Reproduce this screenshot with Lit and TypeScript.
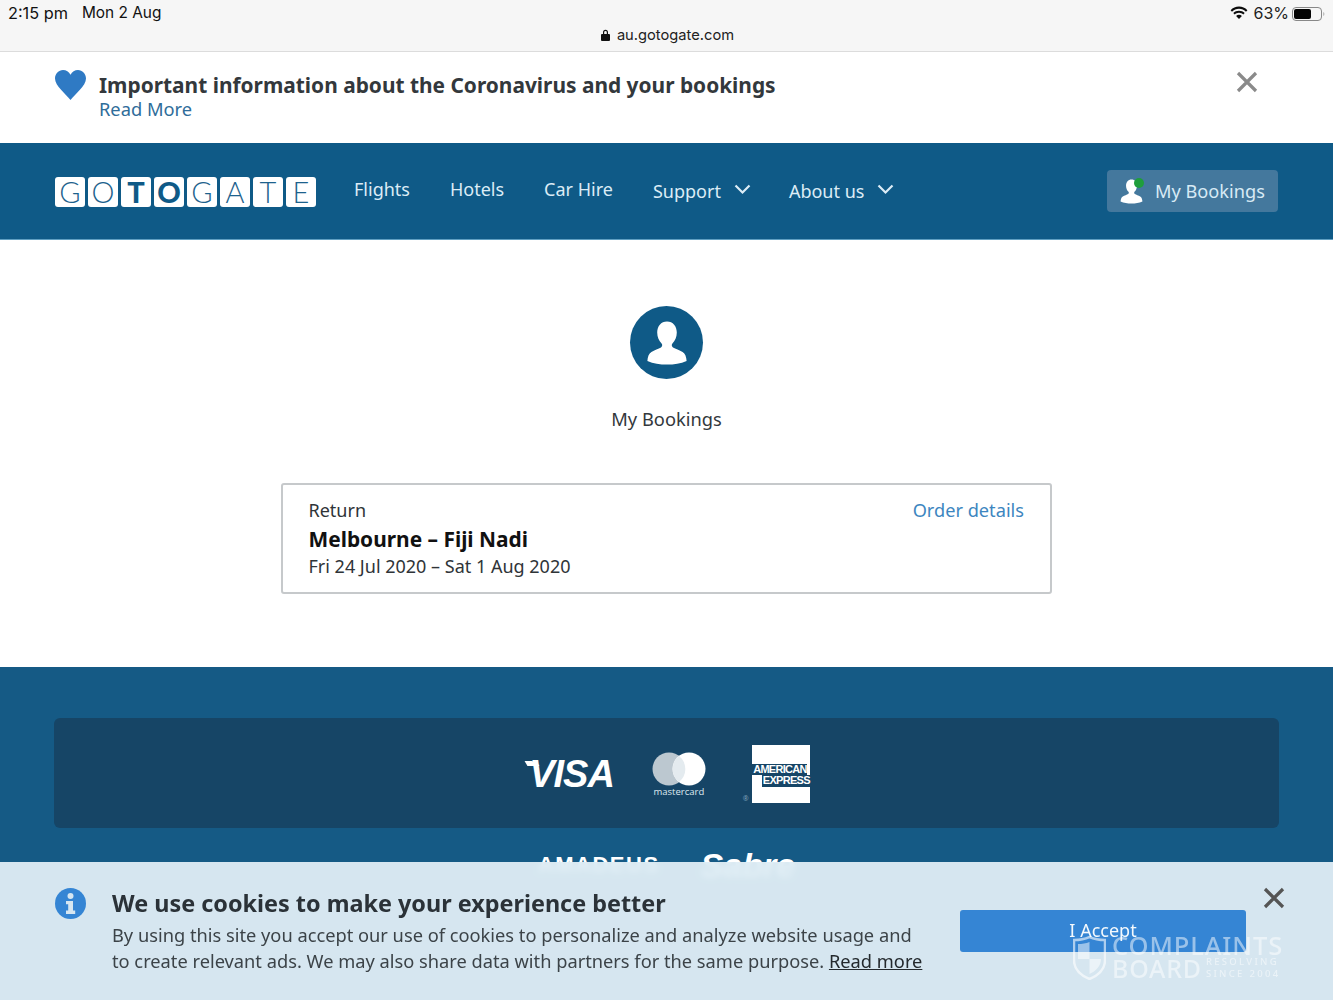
import { LitElement, html, css, svg } from "lit";
import { customElement } from "lit/decorators.js";

const person = svg`<path d="M12 2.2c-3 0-4.9 2.4-4.9 5.6 0 2.2.9 4.2 2.2 5.5.5.6.4 1.5-.3 1.9-1.200.7-3.300 1.300-4.800 2.300C2.900 18.300 2.300 20 2.200 22c3 1.300 6.200 1.800 9.800 1.800s6.800-.5 9.800-1.800c-.1-2-.7-3.700-2-4.500-1.500-1-3.600-1.600-4.800-2.300-.7-.4-.8-1.300-.3-1.900 1.300-1.300 2.200-3.300 2.200-5.500C16.900 4.600 15 2.200 12 2.200z"/>`;

@customElement("app-root")
export class AppRoot extends LitElement {
  static styles = css`
    :host { display: block; position: relative; height: 1000px; overflow: hidden; background: #fff; font-family: "Noto Sans", sans-serif; color: #2f3438; }
    a { text-decoration: none; color: inherit; }
    .status { height: 52px; box-sizing: border-box; background: #f6f6f6; border-bottom: 1px solid #dcdcdc; font-family: Inter, "Liberation Sans", sans-serif; color: #111; font-size: 15.400px; }
    .status-row { display: flex; justify-content: space-between; padding: 3px 5px 0 8px; line-height: 20px; }
    .left { display: flex; gap: 14px; }
    .time { font-size: 16.300px; }
    .right { display: flex; align-items: center; gap: 5px; font-size: 16px; color: #222; }
    .wifi { width: 18px; height: 14px; fill: #0c0c0c; }
    .battery { width: 36px; height: 16px; margin: 1px 0 0 -1px; }
    .pct { margin-right: -1px; }
    .url { display: flex; justify-content: center; align-items: center; gap: 7px; margin-top: 2px; padding-left: 2px; line-height: 20px; font-size: 14.700px; color: #222; }
    .lock { width: 9px; height: 12px; fill: #111; }

    .notice { height: 91px; box-sizing: border-box; display: flex; padding: 18px 75px 0 55px; }
    .heart { width: 31px; height: 30px; fill: #2f7ac4; flex: none; }
    .notice-text { margin-left: 13px; flex: 1; padding-top: 1px; }
    .notice-title { font-size: 20.880px; line-height: 28px; font-weight: 700; color: #33383c; }
    .notice-link { font-size: 18.300px; line-height: 21px; margin-top: -1px; color: #2f6d9a; }
    .x { width: 22px; height: 22px; stroke: #8a8a8a; stroke-width: 3.200; fill: none; flex: none; margin-top: 1px; }

    nav { height: 97px; background: #0f5a87; border-bottom: 1px solid #5f9fc2; display: flex; align-items: center; padding: 0 55px; box-sizing: border-box; color: #dcecf6; font-size: 18px; }
    .logo { display: flex; gap: 3px; margin-right: 38px; margin-top: 1px; }
    .tile { width: 30px; height: 30px; background: #fff; border-radius: 3px; display: flex; align-items: center; justify-content: center; color: #1d628d; font-family: Lato, "Noto Sans", sans-serif; font-size: 29px; font-weight: 300; line-height: 30px; }
    .tile.b { font-weight: 900; color: #0f5a87; }
    .links { display: flex; align-items: center; flex: 1; }
    .links a { display: flex; align-items: center; margin-right: 40px; margin-top: -4px; }
    .links a.dd { margin-top: 0; margin-right: 38px; }
    .links a.dd.last { margin-right: 0; }
    .chev { width: 17px; height: 11px; stroke: #dcecf6; stroke-width: 2.200; fill: none; margin-left: 13px; margin-top: -3px; }
    .mybtn { width: 171px; height: 42px; box-sizing: border-box; background: #44789d; border-radius: 4px; display: flex; align-items: center; padding-left: 10.500px; font-size: 18.200px; color: #d8eaf5; }
    .avatar { position: relative; width: 27px; height: 29px; margin-right: 10.500px; fill: #fff; }
    .avatar svg { width: 27px; height: 29px; display: block; }
    .dot { position: absolute; top: 1.500px; left: 16.500px; width: 10px; height: 10px; background: #1f9e3c; border-radius: 50%; }

    main { height: 427px; box-sizing: border-box; padding-top: 66px; display: flex; flex-direction: column; align-items: center; }
    .circle { width: 73px; height: 73px; border-radius: 50%; background: #0f5a87; display: flex; align-items: center; justify-content: center; fill: #fff; }
    .circle svg { width: 48px; height: 52px; }
    .mb { font-size: 18.300px; line-height: 24px; margin-top: 28px; color: #33383c; }
    .card { width: 771px; height: 111px; box-sizing: border-box; margin-top: 52px; border: 2px solid #c6c9cb; border-radius: 3px; padding: 13px 26px 13px 25.500px; display: flex; justify-content: space-between; }
    .r1 { font-size: 18px; line-height: 24px; }
    .r2 { font-size: 20.900px; line-height: 30px; font-weight: 700; color: #111; margin-top: 2px; }
    .r3 { font-size: 18px; line-height: 24px; }
    .order { font-size: 18.200px; line-height: 24px; color: #3d86c0; }

    footer { background: #155a85; padding: 51px 54px 0; height: 400px; box-sizing: border-box; color: #fff; }
    .panel { height: 110px; background: #164566; border-radius: 6px; display: flex; align-items: center; justify-content: center; padding-left: 2px; }
    .visa { font-family: "Liberation Sans", sans-serif; font-weight: 700; font-style: italic; font-size: 38px; letter-spacing: -1px; line-height: 40px; position: relative; margin: 2px 38px 0 4px; }
    .visa i { position: absolute; left: -3px; top: 7px; width: 12px; height: 5px; background: #fff; border-radius: 0 8px 0 0; transform: skewX(30deg); }
    .mc { display: flex; flex-direction: column; align-items: center; margin-right: 46px; margin-top: 3px; }
    .mc svg { width: 54px; height: 34px; }
    .mc span { font-size: 9.500px; line-height: 10px; margin-top: 1px; color: #dfe9f0; font-family: "Open Sans", sans-serif; }
    .amexwrap { position: relative; margin-top: 2px; }
    .amex { width: 58px; height: 58px; background: #fff; display: flex; flex-direction: column; justify-content: center; align-items: flex-end; padding-top: 2px; box-sizing: border-box; font-family: "Liberation Sans", sans-serif; font-weight: 700; font-size: 11px; line-height: 11.500px; letter-spacing: -.7px; }
    .amex span { background: #164566; color: #fff; padding-left: 1px; }
    .amex span:first-child { margin-right: 3px; }
    .reg { position: absolute; left: -9px; bottom: 0; font-size: 7px; line-height: 8px; color: #7fa0b8; }
    .partners { display: flex; justify-content: center; gap: 41px; margin-top: 19px; align-items: flex-start; }
    .amadeus { font-family: "Liberation Sans", sans-serif; font-weight: 700; font-size: 22px; letter-spacing: 1.500px; line-height: 30px; margin-top: 3px; }
    .sabre { font-family: "Liberation Sans", sans-serif; font-weight: 700; font-style: italic; font-size: 34px; line-height: 36px; }

    .cookie { position: absolute; left: 0; right: 0; bottom: 0; height: 138px; box-sizing: border-box; background: rgba(224, 238, 246, .95); backdrop-filter: blur(3px); display: flex; padding: 26px 0 0 55px; }
    .info { width: 31px; height: 31px; flex: none; }
    .ctext { margin: 0 33px 0 26px; width: 815px; flex: none; }
    .ctitle { font-size: 23.400px; line-height: 30px; font-weight: 700; color: #2b3238; }
    .cbody { font-size: 18.250px; line-height: 26px; color: #3c4348; margin-top: 4px; }
    .cbody a { text-decoration: underline; color: #24292d; }
    .accept { width: 286px; height: 42px; margin-top: 22px; background: #3585d4; border-radius: 3px; color: #f4f9fd; font-size: 18px; line-height: 40px; text-align: center; flex: none; }
    .cx { width: 22px; height: 22px; stroke: #555; stroke-width: 3.200; fill: none; margin: -1px 0 0 17px; flex: none; }

    .mark { position: absolute; left: 1073px; top: 934px; display: flex; gap: 6px; color: rgba(255, 255, 255, .5); font-family: "Noto Sans", sans-serif; font-weight: 500; pointer-events: none; }
    .shield { width: 33px; height: 44px; margin-top: 2px; }
    .mark-t { display: flex; flex-direction: column; }
    .complaints { font-size: 25.500px; line-height: 22px; letter-spacing: .9px; }
    .board-row { display: flex; align-items: center; gap: 4px; }
    .board { font-size: 25px; line-height: 23px; letter-spacing: .8px; }
    .since { font-size: 9.500px; line-height: 12px; letter-spacing: 2.300px; white-space: nowrap; }
  `;

  render() {
    const chev = html`<svg class="chev" viewBox="0 0 17 11"><path d="M1.500 1.500 8.500 8.500 15.500 1.500"/></svg>`;
    return html`
      <div class="status">
        <div class="status-row">
          <div class="left"><span class="time">2:15 pm</span><span>Mon 2 Aug</span></div>
          <div class="right">
            <svg class="wifi" viewBox="0 0 18 14"><path d="M9 2.800c2.700 0 5.200 1.100 7 2.900l1.400-1.500C15.200 2 12.200.6 9 .6S2.800 2 .6 4.200L2 5.700c1.800-1.800 4.300-2.900 7-2.900z"/><path d="M9 6.700c1.700 0 3.200.7 4.300 1.800l1.400-1.500C13.200 5.600 11.200 4.700 9 4.700S4.800 5.600 3.300 7l1.400 1.500C5.800 7.400 7.300 6.700 9 6.700z"/><path d="M9 8.700c-1.100 0-2.100.5-2.900 1.200L9 13l2.900-3.100C11.100 9.200 10.100 8.700 9 8.700z"/></svg>
            <span class="pct">63%</span>
            <svg class="battery" viewBox="0 0 36 16"><rect x=".5" y="1.500" width="29" height="13" rx="3.500" fill="none" stroke="#888"/><rect x="2" y="3" width="17" height="10" rx="2" fill="#050505"/><path d="M31.500 6c1 .5 1 3.500 0 4z" fill="#888"/></svg>
          </div>
        </div>
        <div class="url">
          <svg class="lock" viewBox="0 0 9 12"><path d="M2 5V3.300a2.500 2.500 0 0 1 5 0V5h1a1 1 0 0 1 1 1v5a1 1 0 0 1-1 1H1a1 1 0 0 1-1-1V6a1 1 0 0 1 1-1zm1.200 0h2.600V3.300a1.300 1.300 0 0 0-2.600 0z"/></svg>
          <span>au.gotogate.com</span>
        </div>
      </div>

      <div class="notice">
        <svg class="heart" viewBox="0 0 31 29" preserveAspectRatio="none"><path d="M15.500 29C11 23.500 0 15.500 0 8.300 0 3.500 3.700 0 8 0c3.200 0 6 1.700 7.500 4.500C17 1.700 19.800 0 23 0c4.300 0 8 3.500 8 8.300C31 15.500 20 23.500 15.500 29z"/></svg>
        <div class="notice-text">
          <div class="notice-title">Important information about the Coronavirus and your bookings</div>
          <div class="notice-link"><a href="#">Read More</a></div>
        </div>
        <svg class="x" viewBox="0 0 22 22"><path d="M2 2 20 20M20 2 2 20"/></svg>
      </div>

      <nav>
        <div class="logo">
          ${["G", "O", "T", "O", "G", "A", "T", "E"].map(
            (l, i) => html`<div class="tile ${i === 2 || i === 3 ? "b" : ""}">${l}</div>`
          )}
        </div>
        <div class="links">
          <a href="#">Flights</a>
          <a href="#">Hotels</a>
          <a href="#">Car Hire</a>
          <a href="#" class="dd">Support${chev}</a>
          <a href="#" class="dd last">About us${chev}</a>
        </div>
        <div class="mybtn">
          <div class="avatar"><svg viewBox="0 0 24 26">${person}</svg><span class="dot"></span></div>
          My Bookings
        </div>
      </nav>

      <main>
        <div class="circle"><svg viewBox="0 0 24 26">${person}</svg></div>
        <div class="mb">My Bookings</div>
        <div class="card">
          <div>
            <div class="r1">Return</div>
            <div class="r2">Melbourne – Fiji Nadi</div>
            <div class="r3">Fri 24 Jul 2020 – Sat 1 Aug 2020</div>
          </div>
          <a class="order" href="#">Order details</a>
        </div>
      </main>

      <footer>
        <div class="panel">
          <div class="visa"><i></i>VISA</div>
          <div class="mc">
            <svg viewBox="0 0 54 34"><circle cx="17" cy="17" r="16.500" fill="#bcc8d0"/><circle cx="37" cy="17" r="16.500" fill="#fff"/><path d="M27 4a16.500 16.500 0 0 1 0 26 16.500 16.500 0 0 1 0-26z" fill="#e4ebef"/></svg>
            <span>mastercard</span>
          </div>
          <div class="amexwrap">
            <div class="amex"><span>AMERICAN</span><span>EXPRESS</span></div>
            <div class="reg">®</div>
          </div>
        </div>
        <div class="partners">
          <div class="amadeus">AMADEUS</div>
          <div class="sabre">Sabre</div>
        </div>
      </footer>

      <div class="cookie">
        <svg class="info" viewBox="0 0 31 31"><circle cx="15.500" cy="15.500" r="15.500" fill="#3585d4"/><circle cx="15.500" cy="8" r="3" fill="#d6e6f1"/><path d="M11 13h7v9.500h2.200V26H11v-3.500h2.200V16.300H11z" fill="#d6e6f1"/></svg>
        <div class="ctext">
          <div class="ctitle">We use cookies to make your experience better</div>
          <div class="cbody">By using this site you accept our use of cookies to personalize and analyze website usage and to create relevant ads. We may also share data with partners for the same purpose. <a href="#">Read more</a></div>
        </div>
        <div class="accept">I Accept</div>
        <svg class="cx" viewBox="0 0 22 22"><path d="M2 2 20 20M20 2 2 20"/></svg>
      </div>

      <div class="mark">
        <svg class="shield" viewBox="0 0 33 44"><path d="M16.500 1C11 3.500 6 4 1 4v20c0 9 7 15.500 15.500 19C25 39.500 32 33 32 24V4c-5 0-10-.5-15.500-3z" fill="none" stroke="rgba(255,255,255,.6)" stroke-width="2.500"/><path d="M5 8c4 0 8-.5 11.500-2v17H5zM16.500 23H28c0 7-5 12-11.500 15z" fill="rgba(255,255,255,.5)"/></svg>
        <div class="mark-t">
          <div class="complaints">COMPLAINTS</div>
          <div class="board-row"><div class="board">BOARD</div><div class="since">RESOLVING<br />SINCE 2004</div></div>
        </div>
      </div>
    `;
  }
}
